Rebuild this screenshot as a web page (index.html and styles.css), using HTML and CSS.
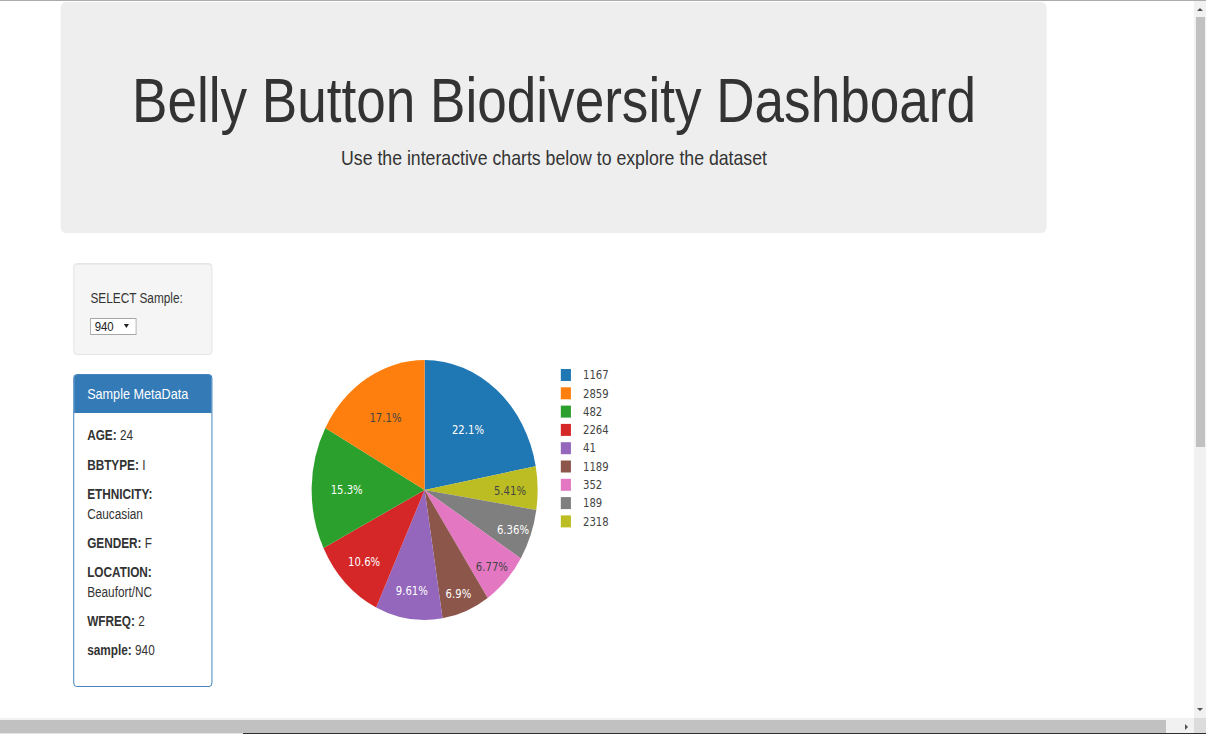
FILE: index.html
```html
<!DOCTYPE html>
<html lang="en">
<head>
<meta charset="utf-8">
<title>Belly Button Biodiversity Dashboard</title>
<link rel="stylesheet" href="styles.css">
</head>
<body>
<div class="topline"></div>
<div class="window">
  <div class="viewport">
    <div class="page">
      <div class="jumbotron">
        <h1>Belly Button Biodiversity Dashboard</h1>
        <p>Use the interactive charts below to explore the dataset</p>
      </div>
      <div class="row">
        <div class="col-side">
          <div class="well">
            <h5 class="select-title">SELECT Sample:</h5>
            <div class="select-wrap">
              <select id="selDataset"><option>940</option></select>
            </div>
          </div>
          <div class="panel">
            <div class="panel-heading"><h3 class="panel-title">Sample MetaData</h3></div>
            <div class="panel-body">
              <p><b>AGE:</b> 24</p>
              <p><b>BBTYPE:</b> I</p>
              <p><b>ETHNICITY:</b> Caucasian</p>
              <p><b>GENDER:</b> F</p>
              <p><b>LOCATION:</b> Beaufort/NC</p>
              <p><b>WFREQ:</b> 2</p>
              <p><b>sample:</b> 940</p>
            </div>
          </div>
        </div>
        <div class="col-main">
          <svg class="pie" width="480" height="380" viewBox="0 0 480 380">
            <g class="slices">
              <path fill="#1f77b4" d="M221.9,227 L221.9,97 A134.1,130 0 0 1 353.73,203.17 Z"/>
              <path fill="#bcbd22" d="M221.9,227 L353.73,203.17 A134.1,130 0 0 1 354.39,247.09 Z"/>
              <path fill="#7f7f7f" d="M221.9,227 L354.39,247.09 A134.1,130 0 0 1 335.93,295.41 Z"/>
              <path fill="#e377c2" d="M221.9,227 L335.93,295.41 A134.1,130 0 0 1 296.71,334.89 Z"/>
              <path fill="#8c564b" d="M221.9,227 L296.71,334.89 A134.1,130 0 0 1 243.13,355.36 Z"/>
              <path fill="#9467bd" d="M221.9,227 L243.13,355.36 A134.1,130 0 0 1 164.32,344.41 Z"/>
              <path fill="#d62728" d="M221.9,227 L164.32,344.41 A134.1,130 0 0 1 101.85,284.92 Z"/>
              <path fill="#2ca02c" d="M221.9,227 L101.85,284.92 A134.1,130 0 0 1 104.08,164.91 Z"/>
              <path fill="#ff7f0e" d="M221.9,227 L104.08,164.91 A134.1,130 0 0 1 221.9,97 Z"/>
            </g>
            <g class="pct">
              <text class="light" x="273.3" y="171.4">22.1%</text>
              <text class="dark" x="175.4" y="159.1">17.1%</text>
              <text class="light" x="129.4" y="231.4">15.3%</text>
              <text class="light" x="150.1" y="303.4">10.6%</text>
              <text class="light" x="206.7" y="332.4">9.61%</text>
              <text class="light" x="262" y="334.7">6.9%</text>
              <text class="dark" x="301.7" y="308.1">6.77%</text>
              <text class="light" x="326.7" y="271.4">6.36%</text>
              <text class="dark" x="323.2" y="232.1">5.41%</text>
            </g>
            <g class="legend">
              <rect fill="#1f77b4" x="383.5" y="106" width="12" height="12"/>
              <text x="409.8" y="116.3">1167</text>
              <rect fill="#ff7f0e" x="383.5" y="124.3" width="12" height="12"/>
              <text x="409.8" y="134.6">2859</text>
              <rect fill="#2ca02c" x="383.5" y="142.6" width="12" height="12"/>
              <text x="409.8" y="152.9">482</text>
              <rect fill="#d62728" x="383.5" y="160.9" width="12" height="12"/>
              <text x="409.8" y="171.2">2264</text>
              <rect fill="#9467bd" x="383.5" y="179.2" width="12" height="12"/>
              <text x="409.8" y="189.5">41</text>
              <rect fill="#8c564b" x="383.5" y="197.5" width="12" height="12"/>
              <text x="409.8" y="207.8">1189</text>
              <rect fill="#e377c2" x="383.5" y="215.8" width="12" height="12"/>
              <text x="409.8" y="226.1">352</text>
              <rect fill="#7f7f7f" x="383.5" y="234.1" width="12" height="12"/>
              <text x="409.8" y="244.4">189</text>
              <rect fill="#bcbd22" x="383.5" y="252.4" width="12" height="12"/>
              <text x="409.8" y="262.7">2318</text>
            </g>
          </svg>
        </div>
      </div>
    </div>
  </div>
  <div class="vscroll">
    <div class="arrow-up"></div>
    <div class="vthumb"></div>
    <div class="vtrack"></div>
    <div class="arrow-down"></div>
  </div>
</div>
<div class="hscroll">
  <div class="hthumb"></div>
  <div class="htrack"><span class="arrow-right"></span></div>
  <div class="corner"></div>
</div>
<div class="taskbar"><div class="tb-light"></div><div class="tb-dark"></div></div>
</body>
</html>
```

FILE: styles.css
```css
html, body {
  margin: 0;
  padding: 0;
}

body {
  width: 1206px;
  height: 734px;
  overflow: hidden;
  background: #fff;
  font-family: "Liberation Sans", Arial, sans-serif;
  font-size: 14px;
  line-height: 1.42857;
  color: #333;
}

.topline {
  height: 1px;
  background: #acacac;
}

.window {
  display: flex;
  height: 717px;
}

.viewport {
  width: 1194px;
  overflow: hidden;
}

/* page laid out at its native width, squeezed horizontally like the capture */
.page {
  width: 1417px;
  box-sizing: border-box;
  padding: 1px 0 0 72.4px;
  transform: scaleX(0.8427);
  transform-origin: 0 0;
}

.jumbotron {
  width: 1170px;
  box-sizing: border-box;
  padding: 48px 60px 45px;
  background: #eee;
  border-radius: 6px;
  text-align: center;
}

.jumbotron h1 {
  margin: 16px 0 8px;
  font-size: 63px;
  line-height: 1.1;
  font-weight: 400;
  color: #333;
}

.jumbotron p {
  margin: 0 0 15px;
  font-size: 21px;
  line-height: 30px;
  font-weight: 400;
}

.row {
  display: flex;
  margin-top: 30px;
}

.col-side {
  width: 195px;
  flex: none;
  box-sizing: border-box;
  padding: 0 15px;
}

.col-main {
  flex: 1;
  padding: 0 15px;
}

.well {
  background: #f5f5f5;
  border: 1px solid #e3e3e3;
  border-radius: 4px;
  box-shadow: inset 0 1px 1px rgba(0, 0, 0, 0.05);
  padding: 19px;
  margin-bottom: 19px;
}

.select-title {
  margin: 5px 0 10px;
  font-size: 14px;
  line-height: 20px;
  font-weight: 400;
}

.select-wrap {
  position: relative;
  width: 55px;
  height: 17px;
}

.select-wrap select {
  -webkit-appearance: none;
  appearance: none;
  display: block;
  width: 55px;
  height: 17px;
  box-sizing: border-box;
  margin: 0;
  padding: 0 0 0 4px;
  border: 1px solid #a6a6a6;
  border-radius: 0;
  background: #fff;
  font-family: "Liberation Sans", Arial, sans-serif;
  font-size: 13.5px;
  line-height: 15px;
  color: #222;
}

.select-wrap::after {
  content: "";
  position: absolute;
  left: 40px;
  top: 6px;
  border-left: 3px solid transparent;
  border-right: 3px solid transparent;
  border-top: 4px solid #222;
}

.panel {
  background: #fff;
  border: 1px solid #337ab7;
  border-radius: 4px;
}

.panel-heading {
  background: #337ab7;
  color: #fff;
  padding: 10px 15px;
  border-radius: 3px 3px 0 0;
}

.panel-title {
  margin: 0;
  font-size: 15px;
  line-height: 18px;
  font-weight: 400;
}

.panel-body {
  padding: 13px 15px 15px;
}

.panel-body p {
  margin: 0 0 9.6px;
  line-height: 19.7px;
}

.panel-body b {
  font-weight: 700;
}

.pie {
  display: block;
  font-family: "DejaVu Sans", Verdana, sans-serif;
  font-size: 12px;
}

.pct text {
  text-anchor: middle;
}

.pct .light {
  fill: #fff;
}

.pct .dark {
  fill: #444;
}

.legend text {
  fill: #444;
}

/* browser scrollbars */
.vscroll {
  width: 12px;
  background: #f1f1f1;
  display: flex;
  flex-direction: column;
}

.arrow-up,
.arrow-down {
  display: flex;
  align-items: center;
  justify-content: center;
}

.arrow-up {
  height: 16px;
}

.arrow-down {
  height: 18px;
}

.arrow-up::before {
  content: "";
  border-left: 3.5px solid transparent;
  border-right: 3.5px solid transparent;
  border-bottom: 3px solid #505050;
}

.arrow-down::before {
  content: "";
  border-left: 3.5px solid transparent;
  border-right: 3.5px solid transparent;
  border-top: 3px solid #505050;
}

.vthumb {
  width: 9px;
  height: 430px;
  margin-left: 2px;
  background: #c1c1c1;
}

.vtrack {
  flex: 1;
}

.hscroll {
  height: 15px;
  box-sizing: border-box;
  padding-top: 2px;
  background: #f1f1f1;
  display: flex;
}

.hthumb {
  width: 1166px;
  background: #c1c1c1;
}

.htrack {
  flex: 1;
  display: flex;
  align-items: center;
}

.arrow-right {
  margin-left: 19px;
  border-top: 3px solid transparent;
  border-bottom: 3px solid transparent;
  border-left: 3px solid #505050;
}

.corner {
  width: 12px;
  margin-top: -2px;
  background: #dcdcdc;
}

.taskbar {
  height: 1px;
  display: flex;
}

.tb-light {
  width: 243px;
  background: #e4e4e4;
}

.tb-dark {
  flex: 1;
  background: #2b3034;
}
```
